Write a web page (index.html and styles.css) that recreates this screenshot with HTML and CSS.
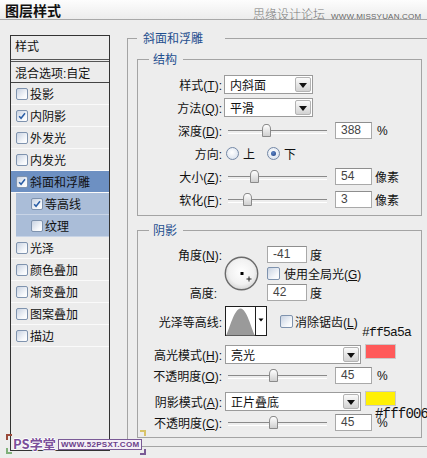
FILE: index.html
```html
<!DOCTYPE html>
<html lang="zh-CN">
<head>
<meta charset="utf-8">
<title>图层样式</title>
<link rel="stylesheet" href="styles.css">
</head>
<body>
<header class="titlebar"><h1 class="title">图层样式</h1></header>
<div class="wm-top"><span class="wm-cn">思缘设计论坛</span><span class="wm-en">WWW.MISSYUAN.COM</span></div>

<div class="main">
  <aside class="styles-list">
    <div class="list-head">样式</div>
    <div class="item blend">混合选项:自定</div>
    <div class="item"><span class="cb"></span>投影</div>
    <div class="item"><span class="cb"><svg viewBox="0 0 12 12"><path d="M2.6 6.2l2.3 2.6L9.6 2.8"/></svg></span>内阴影</div>
    <div class="item"><span class="cb"></span>外发光</div>
    <div class="item"><span class="cb"></span>内发光</div>
    <div class="item selected"><span class="cb"><svg viewBox="0 0 12 12"><path d="M2.6 6.2l2.3 2.6L9.6 2.8"/></svg></span>斜面和浮雕</div>
    <div class="item sub"><span class="cb"><svg viewBox="0 0 12 12"><path d="M2.6 6.2l2.3 2.6L9.6 2.8"/></svg></span>等高线</div>
    <div class="item sub"><span class="cb"></span>纹理</div>
    <div class="item"><span class="cb"></span>光泽</div>
    <div class="item"><span class="cb"></span>颜色叠加</div>
    <div class="item"><span class="cb"></span>渐变叠加</div>
    <div class="item"><span class="cb"></span>图案叠加</div>
    <div class="item"><span class="cb"></span>描边</div>
  </aside>

  <section class="panel">
    <fieldset class="group outer">
      <legend class="legend-outer">斜面和浮雕</legend>

      <fieldset class="group inner struct">
        <legend class="legend-inner">结构</legend>
        <div class="row">
          <span class="lbl">样式(<u>T</u>):</span>
          <div class="select sel-struct"><span class="sel-text">内斜面</span><span class="sel-btn"></span></div>
        </div>
        <div class="row">
          <span class="lbl">方法(<u>Q</u>):</span>
          <div class="select sel-struct"><span class="sel-text">平滑</span><span class="sel-btn"></span></div>
        </div>
        <div class="row">
          <span class="lbl">深度(<u>D</u>):</span>
          <div class="slider"><span class="thumb" style="left:38px"></span></div>
          <span class="num">388</span><span class="unit">%</span>
        </div>
        <div class="row">
          <span class="lbl">方向:</span>
          <span class="radio"></span><span class="rtext">上</span>
          <span class="radio on"></span><span class="rtext">下</span>
        </div>
        <div class="row">
          <span class="lbl">大小(<u>Z</u>):</span>
          <div class="slider"><span class="thumb" style="left:26px"></span></div>
          <span class="num">54</span><span class="unit px">像素</span>
        </div>
        <div class="row">
          <span class="lbl">软化(<u>F</u>):</span>
          <div class="slider"><span class="thumb" style="left:19px"></span></div>
          <span class="num">3</span><span class="unit px">像素</span>
        </div>
      </fieldset>

      <fieldset class="group inner shadow">
        <legend class="legend-inner">阴影</legend>
        <div class="angle">
          <span class="lbl a-r1">角度(<u>N</u>):</span>
          <svg class="dial" width="35" height="35" viewBox="0 0 35 35">
            <defs>
              <radialGradient id="dialg" cx="50%" cy="45%" r="55%">
                <stop offset="0" stop-color="#ffffff"/>
                <stop offset="0.7" stop-color="#f1f1f1"/>
                <stop offset="1" stop-color="#d6d6d6"/>
              </radialGradient>
            </defs>
            <circle cx="17.5" cy="17.5" r="16.2" fill="url(#dialg)" stroke="#6b6b6b" stroke-width="1.4"/>
            <rect x="16.5" y="16" width="3" height="3" fill="#000"/>
            <path d="M25 20.5v5M22.5 23h5" stroke="#222" stroke-width="1" fill="none"/>
          </svg>
          <div class="ctl a-r1"><span class="num w40">-41</span><span class="unit deg">度</span></div>
          <div class="ctl a-r2"><span class="cb cb13"></span><span class="cbtext">使用全局光(<u>G</u>)</span></div>
          <span class="lbl a-r3 lbl-alt">高度:</span>
          <div class="ctl a-r3"><span class="num w40">42</span><span class="unit deg">度</span></div>
        </div>

        <div class="row contour-row">
          <span class="lbl">光泽等高线:</span>
          <svg class="contour" width="42" height="30" viewBox="0 0 42 30">
            <rect x="0.5" y="0.5" width="41" height="29" fill="#fff" stroke="#1e1e1e"/>
            <path d="M1 29.5 C5 22 9 3 15.5 2.5 C22 3 26 22 30 29.5 Z" fill="#9a9a9a"/>
            <line x1="30.5" y1="0.5" x2="30.5" y2="29.5" stroke="#1e1e1e"/>
            <path d="M33.5 12.5h5l-2.5 3z" fill="#000"/>
          </svg>
          <span class="cb cb13 aa"></span><span class="cbtext">消除锯齿(<u>L</u>)</span>
        </div>

        <div class="row mode-row">
          <span class="lbl">高光模式(<u>H</u>):</span>
          <div class="select sel-mode"><span class="sel-text">亮光</span><span class="sel-btn"></span></div>
          <span class="swatch sw-red"></span>
        </div>
        <div class="row op-row">
          <span class="lbl">不透明度(<u>O</u>):</span>
          <div class="slider"><span class="thumb" style="left:45px"></span></div>
          <span class="num">45</span><span class="unit">%</span>
        </div>
        <div class="row mode-row gap">
          <span class="lbl">阴影模式(<u>A</u>):</span>
          <div class="select sel-mode"><span class="sel-text">正片叠底</span><span class="sel-btn"></span></div>
          <span class="swatch sw-yellow"></span>
        </div>
        <div class="row op-row">
          <span class="lbl">不透明度(<u>C</u>):</span>
          <div class="slider"><span class="thumb" style="left:45px"></span></div>
          <span class="num">45</span><span class="unit">%</span>
        </div>
      </fieldset>
    </fieldset>
  </section>
</div>

<span class="note note-red">#ff5a5a</span>
<span class="note note-yellow">#fff006</span>

<div class="wm-bottom">
  <span class="corner c-tl"></span>
  <span class="corner c-bl"></span>
  <span class="corner c-tr"></span>
  <span class="corner c-br"></span>
  <span class="wm-ps">PS学堂</span>
  <span class="wm-url">WWW.52PSXT.COM</span>
</div>
</body>
</html>
```

FILE: styles.css
```css
* { box-sizing: border-box; }
html, body { margin: 0; padding: 0; }
body {
  width: 427px;
  height: 458px;
  overflow: hidden;
  position: relative;
  background: #ededed;
  font-family: "Liberation Sans", "Noto Sans CJK SC", sans-serif;
  font-size: 12px;
  color: #111;
}
u { text-decoration: underline; text-underline-offset: 1px; }

/* title bar */
.titlebar {
  height: 20px;
  border-bottom: 1px solid #a8a8a8;
  background: linear-gradient(#fdfdfd, #ececec);
  padding-left: 5px;
}
.title {
  margin: 0;
  font-family: "Noto Sans CJK SC", sans-serif;
  font-size: 14px;
  font-weight: 700;
  line-height: 20px;
  color: #111;
}
.wm-top {
  position: absolute;
  left: 253px;
  top: 6px;
  display: flex;
  align-items: baseline;
  color: #7a7a7a;
}
.wm-cn { font-family: "Noto Sans CJK SC", sans-serif; font-size: 12px; line-height: 16px; font-weight: 300; }
.wm-en { margin-left: 6px; font-size: 8px; letter-spacing: 0.2px; color: #666; }

/* main layout */
.main { display: flex; align-items: flex-start; }

.styles-list {
  flex: none;
  margin: 15px 0 0 10px;
  width: 100px;
  height: 416px;
  border: 1px solid #333;
  background: #ececec;
}
.list-head {
  height: 26px;
  line-height: 23px;
  padding-left: 4px;
  border-bottom: 3px double #555;
}
.item {
  display: flex;
  align-items: center;
  height: 22px;
  padding-left: 5px;
  border-bottom: 1px solid #fafafa;
  white-space: nowrap;
}
.item.blend { height: 21px; padding-left: 4px; border-bottom: 1px solid #444; }
.item.selected { background: #6d90c2; }
.item.sub { margin-left: 5px; padding-left: 15px; background: #aabdd8; border-bottom-color: #c8d4e6; }

.cb {
  flex: none;
  display: inline-block;
  width: 12px;
  height: 12px;
  margin-right: 2px;
  border: 1px solid #7f93ae;
  border-radius: 2px;
  background: linear-gradient(135deg, #c9d3e2, #f6f8fb 70%, #ffffff);
  position: relative;
}
.cb svg {
  position: absolute;
  left: 0;
  top: 0;
  width: 10px;
  height: 10px;
}
.cb svg path { fill: none; stroke: #2a5ea6; stroke-width: 1.8; }
.cb13 { width: 13px; height: 13px; }

/* right panel */
.panel { flex: none; }
.group {
  margin: 0;
  padding: 0;
  border: 1px solid #a4a4a4;
  min-width: 0;
}
.group > legend {
  font-family: "Noto Sans CJK SC", sans-serif;
  font-size: 12px;
  line-height: 14px;
  color: #1f4f8f;
}
.outer {
  margin: 11px 0 0 17px;
  width: 310px;
  padding: 7px 0 8px 9px;
}
.legend-outer { padding: 0 22px 0 6px; }
.inner { width: 285px; }
.legend-inner { margin-left: 11px; padding: 0 6px 0 4px; }
.struct { padding: 7px 0 4px 0; }
.shadow { margin-top: 7px; padding: 8px 0 4px 0; }

.row { display: flex; align-items: center; height: 23px; white-space: nowrap; }
.lbl { flex: none; width: 84px; text-align: right; white-space: nowrap; }
.lbl-alt { padding-right: 5px; }

.select {
  display: flex;
  height: 19px;
  border: 1px solid #9b9b9b;
  background: #fff;
}
.sel-struct { width: 89px; margin-left: 2px; }
.sel-mode { width: 136px; margin-left: 3px; }
.sel-text { flex: 1; padding-left: 5px; line-height: 17px; font-family: "Noto Sans CJK SC", sans-serif; }
.sel-btn {
  flex: none;
  width: 16px;
  margin: 1px;
  border: 1px solid #b3b3b3;
  border-radius: 2px;
  background: linear-gradient(#fbfbfb, #d2d2d2);
  position: relative;
}
.sel-btn::after {
  content: "";
  position: absolute;
  left: 3px;
  top: 5px;
  border-left: 4px solid transparent;
  border-right: 4px solid transparent;
  border-top: 5px solid #111;
}

.slider {
  flex: none;
  position: relative;
  width: 99px;
  height: 15px;
  margin-left: 6px;
}
.slider::before {
  content: "";
  position: absolute;
  left: 0;
  right: 0;
  top: 7px;
  height: 2px;
  border-top: 1px solid #8a8a8a;
  border-bottom: 1px solid #ffffff;
}
.thumb {
  position: absolute;
  top: 1px;
  width: 9px;
  height: 13px;
  margin-left: -4px;
  border: 1px solid #8a8a8a;
  border-radius: 4px 4px 1px 1px / 5px 5px 1px 1px;
  background: linear-gradient(#ffffff, #cfcfcf);
}

.num {
  flex: none;
  width: 37px;
  height: 17px;
  margin-left: 8px;
  padding-left: 5px;
  border: 1px solid #a9a9a9;
  border-top-color: #8e8e8e;
  background: #fff;
  color: #444;
  line-height: 15px;
}
.w40 { width: 40px; margin-left: 0; }
.unit { margin-left: 5px; }
.unit.px { margin-left: 3px; font-family: "Noto Sans CJK SC", sans-serif; }
.unit.deg { margin-left: 3px; font-family: "Noto Sans CJK SC", sans-serif; }

.radio {
  flex: none;
  width: 13px;
  height: 13px;
  border: 1px solid #7488a6;
  border-radius: 50%;
  background: radial-gradient(circle at 45% 40%, #ffffff, #dfe6f0 70%, #c3cfe0);
  margin-left: 4px;
  position: relative;
}
.radio.on { margin-left: 12px; }
.radio.on::after {
  content: "";
  position: absolute;
  left: 3px;
  top: 3px;
  width: 5px;
  height: 5px;
  border-radius: 50%;
  background: radial-gradient(circle at 40% 35%, #5c86c8, #1f3f80);
}
.rtext { margin-left: 4px; }

/* angle block */
.angle {
  display: grid;
  grid-template-columns: 84px 45px auto;
  grid-template-rows: 19px 19px 19px;
  align-items: center;
}
.a-r1 { grid-row: 1; }
.a-r2 { grid-row: 2; grid-column: 3; }
.a-r3 { grid-row: 3; }
.angle .lbl { grid-column: 1; }
.angle .ctl { grid-column: 3; display: flex; align-items: center; }
.dial { grid-column: 2; grid-row: 1 / 4; margin-left: 2px; align-self: center; }
.cbtext { margin-left: 2px; }

.contour-row { height: 30px; margin-top: 4px; }
.contour { flex: none; margin-left: 3px; }
.aa { margin-left: 13px; margin-right: 0; }

.mode-row { height: 22px; margin-top: 7px; }
.mode-row.gap { margin-top: 4px; }
.op-row { height: 21px; }
.swatch {
  flex: none;
  align-self: flex-start;
  margin: 1px 0 0 4px;
  width: 31px;
  height: 15px;
  border: 1px solid #c9c9c9;
}
.sw-red { background: #ff5a5a; }
.sw-yellow { background: #fff006; }

/* annotations */
.note {
  position: absolute;
  font-family: "Liberation Mono", monospace;
  font-size: 13px;
  letter-spacing: -0.8px;
  color: #111;
  line-height: 14px;
}
.note-red { left: 362px; top: 326px; }
.note-yellow { left: 375px; top: 407px; font-size: 14px; }

/* bottom watermark */
.wm-bottom {
  position: absolute;
  left: 0;
  top: 430px;
  width: 150px;
  height: 28px;
}
.wm-ps {
  position: absolute;
  left: 13px;
  top: 6px;
  font-family: "Noto Sans CJK SC", sans-serif;
  font-size: 13px;
  font-weight: 700;
  line-height: 15px;
  color: #7a4f9a;
  text-shadow: 1px 0 0 #fff, -1px 0 0 #fff, 0 1px 0 #fff, 0 -1px 0 #fff;
}
.wm-url {
  position: absolute;
  left: 58px;
  top: 9px;
  height: 11px;
  padding: 0 2px;
  border: 1px solid #7a5a96;
  background: #f4f0f6;
  font-size: 8px;
  font-weight: 700;
  line-height: 9px;
  color: #6a3f8a;
  letter-spacing: 0.3px;
}
.corner { position: absolute; width: 6px; height: 6px; }
.c-tl { left: 6px; top: 4px; border-left: 2px solid #9a4a3a; border-top: 2px solid #9a4a3a; }
.c-bl { left: 6px; top: 18px; border-left: 2px solid #7fb07a; border-bottom: 2px solid #7fb07a; }
.c-tr { left: 140px; top: 0px; border-right: 2px solid #d8c36a; border-top: 2px solid #d8c36a; }
.c-br { left: 140px; top: 19px; border-right: 2px solid #7a5a96; border-bottom: 2px solid #7a5a96; }
```
